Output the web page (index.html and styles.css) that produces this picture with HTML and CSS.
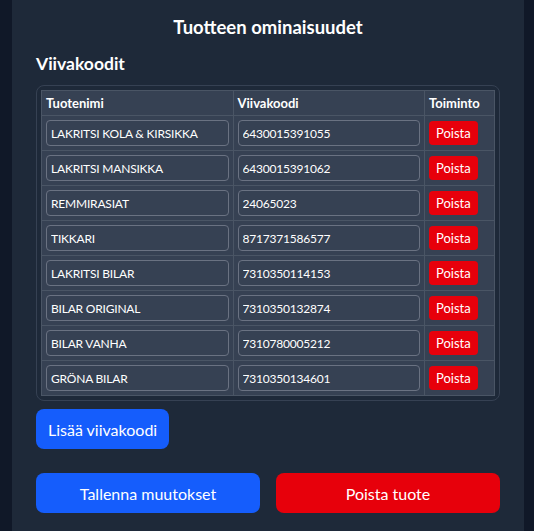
FILE: index.html
```html
<!DOCTYPE html>
<html lang="fi">
<head>
    <meta charset="UTF-8">
    <meta name="viewport" content="width=device-width, initial-scale=1.0">
    <title>Tuotteen ominaisuudet</title>
    <link rel="stylesheet" href="styles.css">
</head>
<body>
    <div class="panel">
        <h1>Tuotteen ominaisuudet</h1>

        <h2>Viivakoodit</h2>
        <div class="table-wrap">
            <table class="barcodes">
                <colgroup>
                    <col class="col-name">
                    <col class="col-code">
                    <col class="col-action">
                </colgroup>
                <thead>
                    <tr>
                        <th>Tuotenimi</th>
                        <th>Viivakoodi</th>
                        <th>Toiminto</th>
                    </tr>
                </thead>
                <tbody>
                    <tr>
                        <td><input type="text" value="LAKRITSI KOLA &amp; KIRSIKKA"></td>
                        <td><input type="text" value="6430015391055"></td>
                        <td><button class="btn-small">Poista</button></td>
                    </tr>
                    <tr>
                        <td><input type="text" value="LAKRITSI MANSIKKA"></td>
                        <td><input type="text" value="6430015391062"></td>
                        <td><button class="btn-small">Poista</button></td>
                    </tr>
                    <tr>
                        <td><input type="text" value="REMMIRASIAT"></td>
                        <td><input type="text" value="24065023"></td>
                        <td><button class="btn-small">Poista</button></td>
                    </tr>
                    <tr>
                        <td><input type="text" value="TIKKARI"></td>
                        <td><input type="text" value="8717371586577"></td>
                        <td><button class="btn-small">Poista</button></td>
                    </tr>
                    <tr>
                        <td><input type="text" value="LAKRITSI BILAR"></td>
                        <td><input type="text" value="7310350114153"></td>
                        <td><button class="btn-small">Poista</button></td>
                    </tr>
                    <tr>
                        <td><input type="text" value="BILAR ORIGINAL"></td>
                        <td><input type="text" value="7310350132874"></td>
                        <td><button class="btn-small">Poista</button></td>
                    </tr>
                    <tr>
                        <td><input type="text" value="BILAR VANHA"></td>
                        <td><input type="text" value="7310780005212"></td>
                        <td><button class="btn-small">Poista</button></td>
                    </tr>
                    <tr>
                        <td><input type="text" value="GRÖNA BILAR"></td>
                        <td><input type="text" value="7310350134601"></td>
                        <td><button class="btn-small">Poista</button></td>
                    </tr>
                </tbody>
            </table>
        </div>

        <button class="btn btn-blue btn-add">Lisää viivakoodi</button>

        <!-- Save / delete row -->
        <div class="actions">
            <button class="btn btn-blue">Tallenna muutokset</button>
            <button class="btn btn-red">Poista tuote</button>
        </div>
    </div>
</body>
</html>
```

FILE: styles.css
```css
body {
    margin: 0;
    background-color: #101828;
    color: #fff;
    font-family: Lato, "Noto Sans", sans-serif;
}

.panel {
    width: 512px;
    margin-left: 12px;
    box-sizing: border-box;
    padding: 13px 24px 18px;
    background-color: #1e2939;
}

h1 {
    margin: 0;
    font-size: 18.5px;
    font-weight: 700;
    text-align: center;
    line-height: 28px;
}

h2 {
    margin: 10px 0 8px;
    font-size: 17.5px;
    font-weight: 700;
    line-height: 26px;
}

.table-wrap {
    border: 1px solid #364153;
    border-radius: 8px;
    padding: 4px;
}

.barcodes {
    width: 100%;
    border-collapse: collapse;
    table-layout: fixed;
    background-color: #364153;
    font-size: 13px;
}

.col-name, .col-code {
    width: auto;
}

.col-action {
    width: 70px;
}

.barcodes th, .barcodes td {
    border: 1px solid #4a5565;
    padding: 4px;
    text-align: left;
}

.barcodes th {
    font-weight: 700;
    line-height: 16px;
}

.barcodes input {
    display: block;
    width: 100%;
    height: 26px;
    box-sizing: border-box;
    padding: 0 4px;
    background-color: #364153;
    color: #fff;
    border: 1px solid #6a7282;
    border-radius: 4px;
    font-family: inherit;
    font-size: 12px;
    letter-spacing: -0.2px;
}

.btn-small {
    display: block;
    height: 24px;
    padding: 0 7px;
    background-color: #e7000b;
    color: #fff;
    border: none;
    border-radius: 4px;
    font-family: inherit;
    font-size: 13px;
    cursor: pointer;
}

.btn {
    height: 40px;
    border: none;
    border-radius: 8px;
    color: #fff;
    font-family: inherit;
    font-size: 16px;
    cursor: pointer;
}

.btn-blue {
    background-color: #155dfc;
}

.btn-red {
    background-color: #e7000b;
}

.btn-add {
    margin-top: 8px;
    padding: 0 12px;
}

.actions {
    display: flex;
    gap: 16px;
    margin-top: 24px;
}

.actions .btn {
    flex: 1;
}
```
